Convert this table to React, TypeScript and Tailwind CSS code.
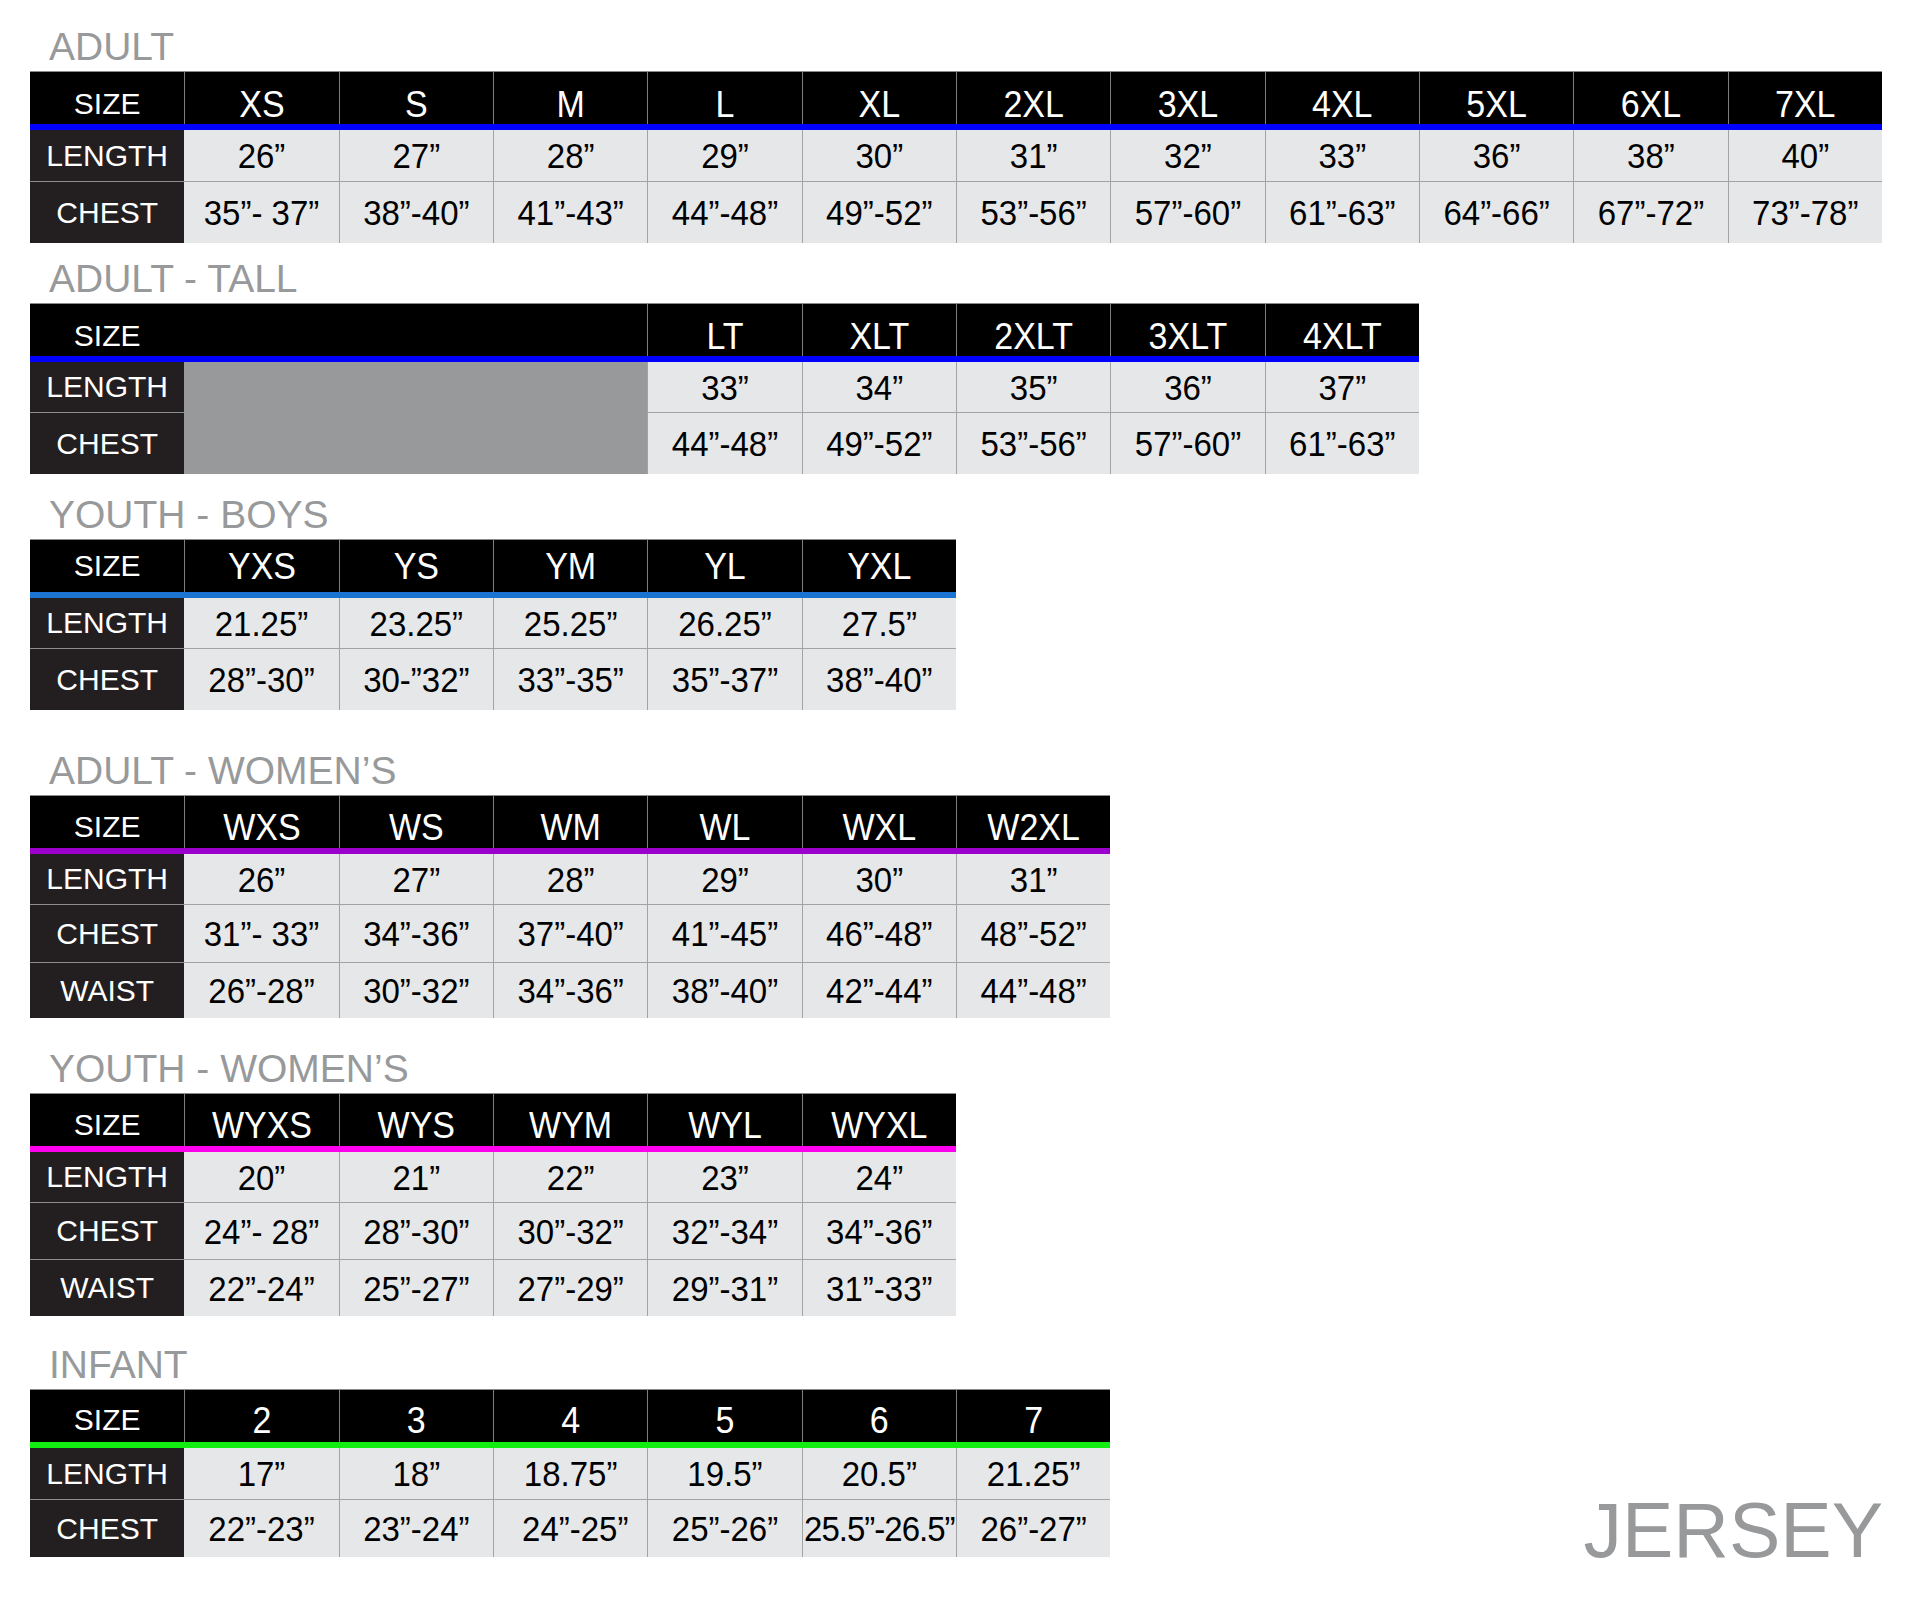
import React from "react";

interface Row {
  label: string;
  h: string;
  values: string[];
}

interface Chart {
  title: string;
  mt: string;
  line: string;
  headPad: string;
  blanks: number;
  sizes: string[];
  rows: Row[];
}

const charts: Chart[] = [
  {
    title: "ADULT",
    mt: "mt-0",
    line: "border-b-[#0000ff]",
    headPad: "pt-[12px]",
    blanks: 0,
    sizes: ["XS", "S", "M", "L", "XL", "2XL", "3XL", "4XL", "5XL", "6XL", "7XL"],
    rows: [
      {
        label: "LENGTH",
        h: "h-[51px]",
        values: ["26”", "27”", "28”", "29”", "30”", "31”", "32”", "33”", "36”", "38”", "40”"],
      },
      {
        label: "CHEST",
        h: "h-[62px]",
        values: [
          "35”- 37”",
          "38”-40”",
          "41”-43”",
          "44”-48”",
          "49”-52”",
          "53”-56”",
          "57”-60”",
          "61”-63”",
          "64”-66”",
          "67”-72”",
          "73”-78”",
        ],
      },
    ],
  },
  {
    title: "ADULT - TALL",
    mt: "mt-[16px]",
    line: "border-b-[#0000ff]",
    headPad: "pt-[11px]",
    blanks: 3,
    sizes: ["LT", "XLT", "2XLT", "3XLT", "4XLT"],
    rows: [
      { label: "LENGTH", h: "h-[50px]", values: ["33”", "34”", "35”", "36”", "37”"] },
      {
        label: "CHEST",
        h: "h-[62px]",
        values: ["44”-48”", "49”-52”", "53”-56”", "57”-60”", "61”-63”"],
      },
    ],
  },
  {
    title: "YOUTH - BOYS",
    mt: "mt-[21px]",
    line: "border-b-[#1b74d1]",
    headPad: "pt-0",
    blanks: 0,
    sizes: ["YXS", "YS", "YM", "YL", "YXL"],
    rows: [
      {
        label: "LENGTH",
        h: "h-[50px]",
        values: ["21.25”", "23.25”", "25.25”", "26.25”", "27.5”"],
      },
      {
        label: "CHEST",
        h: "h-[62px]",
        values: ["28”-30”", "30-”32”", "33”-35”", "35”-37”", "38”-40”"],
      },
    ],
  },
  {
    title: "ADULT - WOMEN’S",
    mt: "mt-[41px]",
    line: "border-b-[#9b00cc]",
    headPad: "pt-[10px]",
    blanks: 0,
    sizes: ["WXS", "WS", "WM", "WL", "WXL", "W2XL"],
    rows: [
      { label: "LENGTH", h: "h-[50px]", values: ["26”", "27”", "28”", "29”", "30”", "31”"] },
      {
        label: "CHEST",
        h: "h-[58px]",
        values: ["31”- 33”", "34”-36”", "37”-40”", "41”-45”", "46”-48”", "48”-52”"],
      },
      {
        label: "WAIST",
        h: "h-[56px]",
        values: ["26”-28”", "30”-32”", "34”-36”", "38”-40”", "42”-44”", "44”-48”"],
      },
    ],
  },
  {
    title: "YOUTH - WOMEN’S",
    mt: "mt-[31px]",
    line: "border-b-[#ff00ee]",
    headPad: "pt-[9px]",
    blanks: 0,
    sizes: ["WYXS", "WYS", "WYM", "WYL", "WYXL"],
    rows: [
      { label: "LENGTH", h: "h-[50px]", values: ["20”", "21”", "22”", "23”", "24”"] },
      {
        label: "CHEST",
        h: "h-[57px]",
        values: ["24”- 28”", "28”-30”", "30”-32”", "32”-34”", "34”-36”"],
      },
      {
        label: "WAIST",
        h: "h-[57px]",
        values: ["22”-24”", "25”-27”", "27”-29”", "29”-31”", "31”-33”"],
      },
    ],
  },
];

const infant: Chart = {
  title: "INFANT",
  mt: "mt-[29px]",
  line: "border-b-[#12ee12]",
  headPad: "pt-[7px]",
  blanks: 0,
  sizes: ["2", "3", "4", "5", "6", "7"],
  rows: [
    {
      label: "LENGTH",
      h: "h-[51px]",
      values: ["17”", "18”", "18.75”", "19.5”", "20.5”", "21.25”"],
    },
    {
      label: "CHEST",
      h: "h-[58px]",
      values: ["22”-23”", "23”-24”", " 24”-25”", "25”-26”", "25.5”-26.5”", "26”-27”"],
    },
  ],
};

const col = "w-[154.33px] shrink-0";

function SizeTable({ chart }: { chart: Chart }) {
  return (
    <div className={`w-fit ${chart.mt}`}>
      <div className="h-[44px] pl-[19px] text-[39px] leading-[39px] text-[#98999b]">
        {chart.title}
      </div>

      <div className={`flex h-[59px] border-t border-b-[6px] border-t-[#8a8a8a] bg-black ${chart.line}`}>
        <div className={`${col} flex items-center justify-center text-[30px] leading-none text-white ${chart.headPad}`}>
          SIZE
        </div>
        {chart.blanks > 0 && <div className="w-[463px] shrink-0" />}
        {chart.sizes.map((s) => (
          <div
            key={s}
            className={`${col} flex items-center justify-center border-l border-[#7d7d7d] text-[34px] leading-none text-white ${chart.headPad}`}
          >
            <span className="inline-block scale-y-[1.06]">{s}</span>
          </div>
        ))}
      </div>

      {chart.rows.map((row, ri) => (
        <div key={row.label} className={`flex ${row.h}`}>
          <div
            className={`${col} flex items-center justify-center bg-[#231f20] text-[30px] leading-none text-white ${
              ri > 0 ? "border-t border-[#8c8c8c]" : ""
            }`}
          >
            {row.label}
          </div>
          {chart.blanks > 0 && <div className="w-[463px] shrink-0 bg-[#98999b]" />}
          {row.values.map((v, vi) => (
            <div
              key={vi}
              className={`${col} flex items-center justify-center whitespace-pre bg-[#e6e7e8] text-[33px] leading-none text-black ${
                vi > 0 || chart.blanks > 0 ? "border-l border-l-[#a3a3a3]" : ""
              } ${ri > 0 ? "border-t border-t-[#a3a3a3]" : ""} ${v.length > 10 ? "tracking-[-1px]" : ""}`}
            >
              <span className="inline-block scale-y-[1.07]">{v}</span>
            </div>
          ))}
        </div>
      ))}
    </div>
  );
}

export default function App() {
  return (
    <div className="h-[1608px] w-[1920px] bg-white pl-[30px] pr-[37px] pt-[27px] font-['Liberation_Sans',Arial,sans-serif]">
      {charts.map((c) => (
        <SizeTable key={c.title} chart={c} />
      ))}
      <div className="flex items-end justify-between">
        <SizeTable chart={infant} />
        <div className="text-[77px] leading-[53px] text-[#98999b]">JERSEY</div>
      </div>
    </div>
  );
}
